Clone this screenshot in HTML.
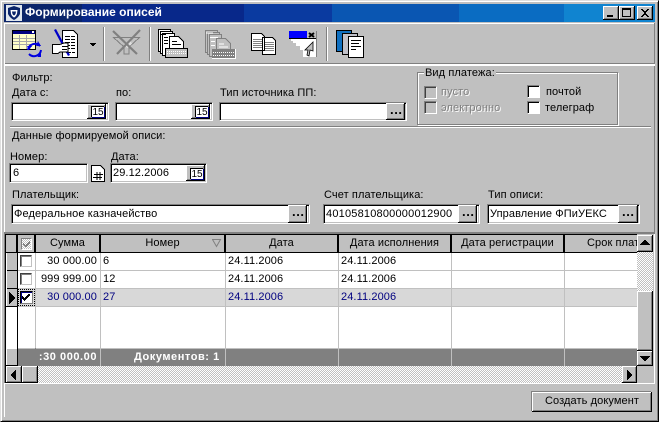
<!DOCTYPE html>
<html><head><meta charset="utf-8">
<style>
html,body{margin:0;padding:0;background:#c0c0c0}
#w{position:relative;width:659px;height:422px;overflow:hidden;background:#c0c0c0;font:11px "Liberation Sans","DejaVu Sans",sans-serif;letter-spacing:.1px;color:#000}
#w div,#w svg{position:absolute}
.t{white-space:nowrap;line-height:13px;height:13px}
.inp{background:#fff;box-sizing:border-box;border:1px solid;border-color:#808080 #fff #fff #808080;box-shadow:inset 1px 1px 0 #000,inset -1px -1px 0 #c0c0c0}
.btn{background:#c0c0c0;box-sizing:border-box;box-shadow:inset -1px -1px 0 #000,inset 1px 1px 0 #fff,inset -2px -2px 0 #808080;text-align:center}
.cb{width:13px;height:13px;box-sizing:border-box;background:#fff;border:1px solid;border-color:#808080 #fff #fff #808080;box-shadow:inset 1px 1px 0 #000}
.cbg{width:13px;height:13px;box-sizing:border-box;background:#c0c0c0;border:1px solid;border-color:#808080 #fff #fff #808080;box-shadow:inset 1px 1px 0 #404040}
.h{top:235px;height:17px;background:#c0c0c0;text-align:center;line-height:16px;border-right:2px solid #000;box-sizing:border-box;white-space:nowrap}
.v{width:1px;background:#c0c0c0}
.dith{background:repeating-conic-gradient(#c0c0c0 0 25%,#fff 0 50%) 0 0/2px 2px}
.d{color:#808080;text-shadow:1px 1px 0 #fff}
.b{color:#000080}
.e{font-weight:bold;font-size:13px;letter-spacing:.6px;line-height:13px}
.c{width:13px;height:11px;box-sizing:border-box;font-size:10px;line-height:11px;letter-spacing:0;text-align:center;background:#fff;border-top:1px solid #000;border-left:1px solid #000;box-shadow:1px 1px 0 #000080;white-space:nowrap}
.ri{left:6px;width:11px;height:18px;background:#c0c0c0;box-sizing:border-box;border-bottom:1px solid #000}
</style></head><body><div id="w">
<!-- window frame -->
<div style="left:0;top:0;width:659px;height:422px;box-sizing:border-box;border:1px solid;border-color:#dfdfdf #000 #000 #dfdfdf;box-shadow:inset 1px 1px 0 #fff,inset -1px -1px 0 #808080"></div>
<!-- title -->
<div style="left:4px;top:4px;width:651px;height:18px;background:linear-gradient(90deg,#0a246a 0 78px,#08288a 78px 240px,#0a3aa0 240px 328px,#0a56b2 328px 455px,#0a6cc2 455px 560px,#1084d0 560px)"></div>
<svg style="left:6px;top:5px" width="16" height="16" viewBox="0 0 16 16"><rect width="16" height="16" fill="#dfe6ee"/><path d="M2 3 L8 1 L14 3 L14 9 Q12 13 8 15 Q4 13 2 9 Z" fill="#0a246a"/><path d="M4.5 5 L11.5 5 L11 9 Q9.5 12 8 12.5 Q6 11.5 5 9 Z" fill="#fff"/><path d="M6 6.5 L10 6.5 L9.5 9 Q8.5 10.5 8 10.5 Q7 10 6.5 9 Z" fill="#0a246a"/></svg>
<div class="t" style="left:25px;top:6px;color:#fff;font-weight:bold;font-size:12px;letter-spacing:0">Формирование описей</div>
<div class="btn" style="left:603px;top:6px;width:16px;height:14px"></div><div style="left:607px;top:15px;width:6px;height:2px;background:#000"></div>
<div class="btn" style="left:619px;top:6px;width:16px;height:14px"></div><div style="left:622px;top:8px;width:9px;height:9px;box-sizing:border-box;border:1px solid #000;border-top-width:2px"></div>
<div class="btn" style="left:637px;top:6px;width:16px;height:14px"></div>
<svg style="left:637px;top:6px" width="16" height="14" shape-rendering="crispEdges"><path d="M4 3 H6 V4 H7 V5 H9 V4 H10 V3 H12 V4 H11 V5 H10 V6 H9 V8 H10 V9 H11 V10 H12 V11 H10 V10 H9 V9 H7 V10 H6 V11 H4 V10 H5 V9 H6 V8 H7 V6 H6 V5 H5 V4 H4 Z" fill="#000"/></svg>
<!-- toolbar lines -->
<div style="left:4px;top:23px;width:651px;height:1px;background:#fff"></div>
<div style="left:4px;top:63px;width:651px;height:1px;background:#808080"></div>
<div style="left:4px;top:64px;width:651px;height:1px;background:#fff"></div>
<div style="left:4px;top:23px;width:1px;height:41px;background:#fff"></div>
<div style="left:654px;top:23px;width:1px;height:41px;background:#808080"></div>
<!-- separators -->
<div style="left:103px;top:27px;width:1px;height:34px;background:#808080"></div><div style="left:104px;top:27px;width:1px;height:34px;background:#fff"></div>
<div style="left:149px;top:27px;width:1px;height:34px;background:#808080"></div><div style="left:150px;top:27px;width:1px;height:34px;background:#fff"></div>
<div style="left:326px;top:27px;width:1px;height:34px;background:#808080"></div><div style="left:327px;top:27px;width:1px;height:34px;background:#fff"></div>
<!-- toolbar icons -->
<svg style="left:0;top:24px" width="380" height="40" viewBox="0 24 380 40" shape-rendering="crispEdges">
<rect x="12.5" y="30.5" width="23" height="19" fill="#ffffc8" stroke="#000"/>
<rect x="13" y="31" width="22" height="3" fill="#000080"/><rect x="32" y="31" width="2" height="2" fill="#fff"/>
<path d="M13 38.5H35M13 41.5H35M13 44.5H35M19.5 35V49M26.5 35V49" stroke="#a8a8a8" fill="none"/>
<g shape-rendering="auto" fill="none" stroke="#0000e0" stroke-width="2"><path d="M28 50 A7 7 0 0 1 40 46"/><path d="M41 50 A7 7 0 0 1 29 54"/></g>
<path d="M27 46 H32 L29 50 Z M37 57 L41 53 V57 Z" fill="#0000e0"/><path d="M38 41 l3 5 l-5 0Z" fill="#0000e0"/>
<path d="M62.5 30.5 H73.5 L77.5 34.5 V57.5 H62.5 Z" fill="#fff" stroke="#000"/>
<path d="M65 36.5H75M65 39.5H75M65 42.5H75M65 45.5H75M65 48.5H75M66 52.5H75" stroke="#000" stroke-dasharray="5 1"/>
<path d="M54 30 L56 29 L70 55 L68 56 Z" fill="#0000c8" shape-rendering="auto"/>
<path d="M52.5 44.5 H60 L64 43 H68 V52 H60 L58 53.5 H52.5 Z" fill="#fff" stroke="#000"/><path d="M62 46.5H68M62 49.5H67" stroke="#000"/>
<path d="M90 43 H96 V44 H95 V45 H94 V46 H92 V45 H91 V44 H90 Z" fill="#000"/>
<path d="M113.5 37.5 H139.5 L129 47 V54 H124 V47 Z" fill="none" stroke="#808080"/>
<path d="M124 44 L130 40 L132 44 L127 48Z" fill="#e0e0e0"/>
<g shape-rendering="auto" stroke="#808080" stroke-width="2.2"><path d="M113 31 L137 54"/><path d="M140 30 L117 54"/></g>
<g fill="#fff" stroke="#000"><path d="M158.5 29.5 H170.5 V51.5 H158.5Z"/><path d="M160.5 31.5 H172.5 V53.5 H160.5Z"/><path d="M162.5 33.5 H174.5 V55.5 H162.5Z"/><path d="M169.5 36.5 H178.5 L183.5 41.5 V50.5 H169.5Z"/></g>
<path d="M160 34.5h6M164 37.5h4M164 40.5h4M164 43.5h4M172 41.5h5M172 44.5h9" stroke="#000"/>
<rect x="165.5" y="48.5" width="22" height="9" fill="#c0c0c0" stroke="#000"/><path d="M167 53.5H186" stroke="#fff" stroke-dasharray="1 1"/><path d="M167 51.5H186" stroke="#fff" stroke-dasharray="1 1"/>
<g fill="#c0c0c0" stroke="#808080"><path d="M205.5 30.5 H217.5 V52.5 H205.5Z"/><path d="M207.5 32.5 H219.5 V54.5 H207.5Z"/><path d="M209.5 34.5 H221.5 V56.5 H209.5Z"/><path d="M216.5 38.5 H225.5 L230.5 43.5 V52.5 H216.5Z"/></g>
<path d="M210 37.5h8M211 41.5h4M211 45.5h4M219 44h5M219 47h9M206 33h7" stroke="#fff"/>
<rect x="212" y="49" width="23" height="9" fill="#808080"/><path d="M213 52.5H234M213 55.5H234" stroke="#fff" stroke-dasharray="1 1"/><path d="M212 58.5H236M235.5 49V59" stroke="#fff"/>
<path d="M251.5 33.5 H261.5 L264.5 36.5 V50.5 H251.5Z M262.5 37.5 H272.5 L275.5 40.5 V54.5 H262.5Z" fill="#fff" stroke="#000"/>
<path d="M253 39.5h9M253 41.5h9M253 43.5h9M253 45.5h9M253 47.5h9M265 42.5h9M265 44.5h9M265 46.5h9M265 48.5h9M265 50.5h9" stroke="#808080"/>
<rect x="289" y="31" width="18" height="8" fill="#0000ff"/><rect x="307" y="31" width="10" height="8" fill="#c0c0c0"/>
<path d="M309 33 l5 4 M314 33 l-5 4" stroke="#000" stroke-width="2" shape-rendering="auto"/>
<path d="M291 39 H317 V57 H303 V50 H300 V46 H296 V43 H293 V41 H291Z" fill="#fff"/>
<path d="M289 38.5H317" stroke="#000"/>
<path d="M316.5 31V57" stroke="#808080"/>
<path d="M313 42 L305 50 L308 50 L307 55 L309 56 L310 50 L313 51Z" fill="#c0c0c0" stroke="#000" shape-rendering="auto" stroke-width=".8"/>
<rect x="336.5" y="30.5" width="15" height="21" fill="#1070c0" stroke="#000"/>
<rect x="342.5" y="33.5" width="15" height="21" fill="#c0c0c8" stroke="#000"/>
<rect x="348.5" y="36.5" width="15" height="21" fill="#fff" stroke="#000"/>
<path d="M351 40.5h10M351 43.5h8M351 46.5h10M351 49.5h5" stroke="#000"/>
</svg>
<!-- form frame -->
<div style="left:4px;top:65px;width:1px;height:168px;background:#fff"></div>
<div style="left:654px;top:65px;width:1px;height:168px;background:#808080"></div>
<div style="left:4px;top:65px;width:651px;height:1px;background:#fff"></div>
<div style="left:4px;top:232px;width:651px;height:1px;background:#808080"></div>
<div class="t" style="left:12px;top:72px">Фильтр:</div>
<div class="t" style="left:12px;top:87px">Дата с:</div>
<div class="inp" style="left:11px;top:102px;width:98px;height:19px"></div>
<div class="btn" style="left:87px;top:104px;width:19px;height:15px"></div>
<div class="t" style="left:116px;top:87px">по:</div>
<div class="inp" style="left:115px;top:102px;width:98px;height:19px"></div>
<div class="btn" style="left:191px;top:104px;width:19px;height:15px"></div>
<div class="t" style="left:220px;top:87px">Тип источника ПП:</div>
<div class="inp" style="left:219px;top:102px;width:188px;height:19px"></div>
<div class="btn" style="left:386px;top:103px;width:19px;height:17px"></div>
<div class="t e" style="left:390px;top:103px">...</div>
<!-- group -->
<div style="left:417px;top:72px;width:199px;height:51px;border:1px solid #808080;box-shadow:1px 1px 0 #fff,inset 1px 1px 0 #fff"></div>
<div class="t" style="left:424px;top:67px;background:#c0c0c0;padding:0 1px">Вид платежа:</div>
<div class="cbg" style="left:424px;top:86px"></div><div class="t d" style="left:441px;top:86px">пусто</div>
<div class="cbg" style="left:424px;top:101px"></div><div class="t d" style="left:441px;top:102px">электронно</div>
<div class="cb" style="left:527px;top:85px"></div><div class="t" style="left:546px;top:86px">почтой</div>
<div class="cb" style="left:527px;top:101px"></div><div class="t" style="left:545px;top:102px">телеграф</div>
<div style="left:10px;top:126px;width:641px;height:1px;background:#808080"></div>
<div style="left:10px;top:127px;width:641px;height:1px;background:#fff"></div>
<div class="t" style="left:12px;top:130px">Данные формируемой описи:</div>
<div class="t" style="left:10px;top:151px">Номер:</div>
<div class="inp" style="left:9px;top:163px;width:79px;height:20px"></div>
<div class="t" style="left:13px;top:167px">6</div>
<svg style="left:91px;top:165px" width="14" height="17" shape-rendering="crispEdges"><path d="M.5 .5H9.5L13.5 4.5V16.5H.5Z" fill="#fff" stroke="#000"/><path d="M3 9.5H12M2 12.5H11M6 7V15M9 7V15" stroke="#000"/></svg>
<div class="t" style="left:111px;top:151px">Дата:</div>
<div class="inp" style="left:110px;top:163px;width:97px;height:20px"></div>
<div class="t" style="left:113px;top:167px">29.12.2006</div>
<div class="btn" style="left:186px;top:165px;width:19px;height:16px"></div>
<div class="t" style="left:12px;top:189px">Плательщик:</div>
<div class="inp" style="left:11px;top:204px;width:299px;height:20px"></div>
<div class="t" style="left:14px;top:208px">Федеральное казначейство</div>
<div class="btn" style="left:288px;top:205px;width:19px;height:18px"></div>
<div class="t e" style="left:292px;top:205px">...</div>
<div class="t" style="left:324px;top:189px">Счет плательщика:</div>
<div class="inp" style="left:323px;top:204px;width:157px;height:20px"></div>
<div class="t" style="left:326px;top:208px;letter-spacing:.2px">40105810800000012900</div>
<div class="btn" style="left:458px;top:205px;width:19px;height:18px"></div>
<div class="t e" style="left:462px;top:205px">...</div>
<div class="t" style="left:488px;top:189px">Тип описи:</div>
<div class="inp" style="left:487px;top:204px;width:153px;height:20px"></div>
<div class="t" style="left:490px;top:208px">Управление ФПиУЕКС</div>
<div class="btn" style="left:618px;top:205px;width:20px;height:18px"></div>
<div class="t e" style="left:622px;top:205px">...</div>
<!-- "15" calendar buttons -->
<div class="c" style="left:91px;top:106px">15</div>
<div class="c" style="left:195px;top:106px">15</div>
<div class="c" style="left:190px;top:168px">15</div>
<!-- grid -->
<div style="left:4px;top:233px;width:651px;height:151px;background:#c0c0c0;border-top:1px solid #808080;border-left:1px solid #808080;box-sizing:border-box"></div>
<div style="left:654px;top:234px;width:1px;height:150px;background:#fff"></div>
<div style="left:4px;top:383px;width:651px;height:1px;background:#fff"></div>
<div style="left:5px;top:234px;width:632px;height:1px;background:#000"></div>
<div style="left:5px;top:234px;width:1px;height:149px;background:#000"></div>
<div style="left:6px;top:235px;width:631px;height:131px;background:#fff"></div>
<!-- header -->
<div class="h" style="left:6px;width:12px"></div>
<div class="h" style="left:18px;width:18px"></div>
<div class="h" style="left:36px;width:65px">Сумма</div>
<div class="h" style="left:101px;width:125px">Номер</div>
<div class="h" style="left:226px;width:113px">Дата</div>
<div class="h" style="left:339px;width:113px">Дата исполнения</div>
<div class="h" style="left:452px;width:113px">Дата регистрации</div>
<div class="h" style="left:565px;width:72px;border-right:0;text-align:left;padding-left:22px;overflow:hidden">Срок плат</div>
<div style="left:6px;top:252px;width:631px;height:1px;background:#000"></div>
<svg style="left:212px;top:239px" width="10" height="9"><path d="M.5 .5H8.5L4.5 7.5Z" fill="none" stroke="#808080"/></svg>
<div style="left:21px;top:238px;width:11px;height:12px;box-sizing:border-box;border:1px solid;border-color:#808080 #fff #fff #808080;background:repeating-conic-gradient(#c0c0c0 0 25%,#fff 0 50%) 0 0/2px 2px"></div>
<svg style="left:23px;top:240px" width="9" height="9" shape-rendering="crispEdges"><path d="M0 3H1V4H2V5H3V4H4V3H5V2H6V1H7V4H6V5H5V6H4V7H2V6H1V5H0Z" fill="#808080"/></svg>
<!-- selected row -->
<div style="left:36px;top:289px;width:601px;height:17px;background:#d8d8d8"></div>
<!-- indicator col -->
<div style="left:6px;top:253px;width:12px;height:113px;background:#fff"></div>
<div style="left:17px;top:253px;width:1px;height:113px;background:#000"></div>
<div class="ri" style="top:253px"></div>
<div class="ri" style="top:271px"></div>
<div class="ri" style="top:289px"></div>
<div style="left:6px;top:253px;width:1px;height:53px;background:#fff"></div>
<svg style="left:8px;top:292px" width="8" height="12" shape-rendering="crispEdges"><path d="M1 0H2V1H3V2H4V3H5V4H6V5H7V7H6V8H5V9H4V10H3V11H2V12H1Z" fill="#000"/></svg>
<!-- row lines -->
<div style="left:18px;top:270px;width:619px;height:1px;background:#c0c0c0"></div>
<div style="left:18px;top:288px;width:619px;height:1px;background:#c0c0c0"></div>
<div style="left:18px;top:306px;width:619px;height:1px;background:#c0c0c0"></div>
<!-- col lines -->
<div class="v" style="left:35px;top:253px;height:95px"></div>
<div class="v" style="left:100px;top:253px;height:95px"></div>
<div class="v" style="left:225px;top:253px;height:95px"></div>
<div class="v" style="left:338px;top:253px;height:95px"></div>
<div class="v" style="left:451px;top:253px;height:95px"></div>
<div class="v" style="left:564px;top:253px;height:95px"></div>
<!-- checkboxes -->
<div style="left:20px;top:255px;width:12px;height:12px;box-sizing:border-box;border:1px solid;border-color:#404040 #c0c0c0 #c0c0c0 #404040;box-shadow:inset 1px 1px 0 #808080;background:#fff"></div>
<div style="left:20px;top:273px;width:12px;height:12px;box-sizing:border-box;border:1px solid;border-color:#404040 #c0c0c0 #c0c0c0 #404040;box-shadow:inset 1px 1px 0 #808080;background:#fff"></div>
<div style="left:18px;top:289px;width:17px;height:17px;box-sizing:border-box;border:1px dotted #000;background:#d8d8d8"></div>
<div style="left:20px;top:291px;width:13px;height:13px;box-sizing:border-box;border:1px solid;border-color:#000 #808080 #808080 #000;background:#fff;box-shadow:inset 1px 1px 0 #000080"></div>
<svg style="left:22px;top:293px" width="9" height="9" shape-rendering="crispEdges"><path d="M0 3H1V4H2V5H3V4H4V3H5V2H6V1H7V1H8V3H7V4H6V5H5V6H4V7H3V8H2V7H1V6H0Z" fill="#000"/></svg>
<!-- data -->
<div class="t" style="left:36px;top:255px;width:61px;text-align:right">30 000.00</div><div class="t" style="left:103px;top:255px">6</div><div class="t" style="left:228px;top:255px">24.11.2006</div><div class="t" style="left:341px;top:255px">24.11.2006</div>
<div class="t" style="left:36px;top:273px;width:61px;text-align:right">999 999.00</div><div class="t" style="left:103px;top:273px">12</div><div class="t" style="left:228px;top:273px">24.11.2006</div><div class="t" style="left:341px;top:273px">24.11.2006</div>
<div class="t b" style="left:36px;top:291px;width:61px;text-align:right">30 000.00</div><div class="t b" style="left:103px;top:291px">27</div><div class="t b" style="left:228px;top:291px">24.11.2006</div><div class="t b" style="left:341px;top:291px">24.11.2006</div>
<!-- footer -->
<div style="left:18px;top:348px;width:619px;height:18px;background:#808080;box-shadow:inset 0 1px 0 #c0c0c0"></div>
<div style="left:6px;top:348px;width:11px;height:18px;background:#c0c0c0;box-shadow:inset 1px 1px 0 #fff;border-bottom:1px solid #000;box-sizing:border-box"></div>
<div class="v" style="left:35px;top:348px;height:18px;background:#808080"></div><div class="v" style="left:100px;top:348px;height:18px"></div><div class="v" style="left:225px;top:348px;height:18px"></div><div class="v" style="left:338px;top:348px;height:18px"></div><div class="v" style="left:451px;top:348px;height:18px"></div><div class="v" style="left:564px;top:348px;height:18px"></div>
<div class="t" style="left:36px;top:351px;width:61px;text-align:right;color:#fff;font-weight:bold;letter-spacing:.55px;overflow:hidden">:30 000.00</div>
<div class="t" style="left:134px;top:351px;color:#fff;font-weight:bold;letter-spacing:.55px">Документов: 1</div>
<!-- hscroll -->
<div class="dith" style="left:6px;top:366px;width:630px;height:17px"></div>
<div class="btn" style="left:6px;top:366px;width:16px;height:17px"></div>
<svg style="left:10px;top:370px" width="8" height="10" shape-rendering="crispEdges"><path d="M6 0H5V1H4V2H3V3H2V4H1V6H2V7H3V8H4V9H5V10H6Z" fill="#000"/></svg>
<div class="btn" style="left:22px;top:366px;width:16px;height:17px"></div>
<div class="btn" style="left:622px;top:366px;width:15px;height:17px"></div>
<svg style="left:626px;top:370px" width="8" height="10" shape-rendering="crispEdges"><path d="M1 0H2V1H3V2H4V3H5V4H6V6H5V7H4V8H3V9H2V10H1Z" fill="#000"/></svg>
<div style="left:637px;top:366px;width:17px;height:17px;background:#c0c0c0"></div>
<!-- vscroll -->
<div class="dith" style="left:637px;top:235px;width:16px;height:131px"></div>
<div class="btn" style="left:637px;top:235px;width:16px;height:17px"></div>
<svg style="left:640px;top:240px" width="10" height="7" shape-rendering="crispEdges"><path d="M4 0H6V1H7V2H8V3H9V4H10V5H0V4H1V3H2V2H3V1H4Z" fill="#000"/></svg>
<div class="btn" style="left:637px;top:291px;width:16px;height:60px"></div>
<div class="btn" style="left:637px;top:351px;width:16px;height:15px"></div>
<svg style="left:640px;top:356px" width="10" height="7" shape-rendering="crispEdges"><path d="M0 0H10V1H9V2H8V3H7V4H6V5H4V4H3V3H2V2H1V1H0Z" fill="#000"/></svg>
<!-- bottom -->
<div style="left:4px;top:384px;width:1px;height:33px;background:#fff"></div>
<div class="btn" style="left:532px;top:392px;width:120px;height:20px;line-height:19px;box-shadow:inset -1px -1px 0 #000,inset 1px 1px 0 #fff,inset -2px -2px 0 #808080,-1px -1px 0 #808080">Создать документ</div>
</div></body></html>
